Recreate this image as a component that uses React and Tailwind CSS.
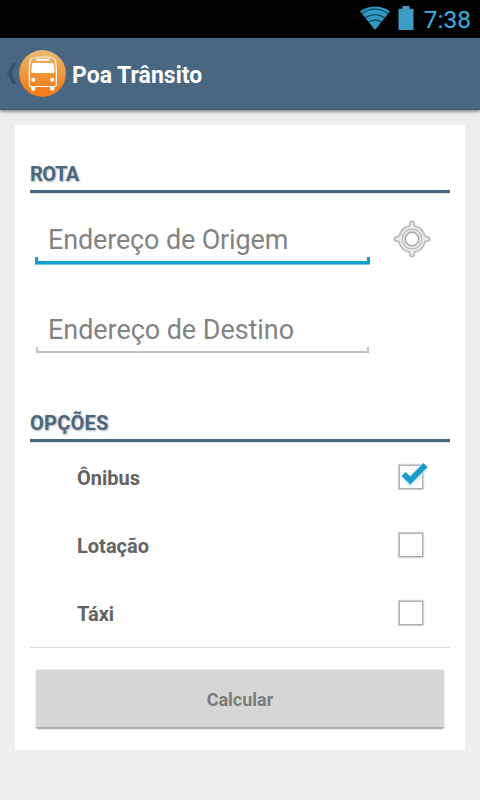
const OPTIONS = [
  { label: "Ônibus", checked: true },
  { label: "Lotação", checked: false },
  { label: "Táxi", checked: false },
];

function WifiIcon() {
  return (
    <svg width="30" height="24" viewBox="0 0 30 24" fill="none">
      <path d="M15 24 0 5.300C8.500-1.200 21.500-1.200 30 5.300Z" fill="#2f98c0" />
      <path d="M1.600 7.700C9.500 1.600 20.500 1.600 28.400 7.700" stroke="#0e4256" strokeWidth="1.100" />
      <path d="M5.200 12C11 7.600 19 7.600 24.800 12" stroke="#0e4256" strokeWidth="1.100" />
      <path d="M8.600 16.200C12.300 13.400 17.700 13.400 21.400 16.200" stroke="#0e4256" strokeWidth="1.100" />
    </svg>
  );
}

function BatteryIcon() {
  return (
    <svg width="16" height="24" viewBox="0 0 16 24">
      <path d="M4.500 0h7v2.700H15.500V24H.5V2.700h4Z" fill="#3f9dc4" />
    </svg>
  );
}

function BusLogo() {
  return (
    <svg width="47" height="47" viewBox="0 0 47 47">
      <defs>
        <linearGradient id="bus-bg" x1="0" y1="0" x2="0" y2="1">
          <stop offset="0" stopColor="#e9bb72" />
          <stop offset="0.5" stopColor="#f0973c" />
          <stop offset="0.8" stopColor="#f47f1f" />
          <stop offset="1" stopColor="#f47f1f" />
        </linearGradient>
      </defs>
      <circle cx="23.500" cy="23.500" r="23.400" fill="url(#bus-bg)" />
      <path
        d="M12 36.500Q10.300 36.500 10.300 34.500V19L11 11C11.300 8.500 17 7 23.800 7S36.300 8.500 36.600 11L37.300 19V34.500Q37.300 36.500 35.500 36.500Z"
        fill="none"
        stroke="#fff"
        strokeWidth="1.200"
        strokeLinejoin="round"
      />
      <rect x="17" y="8.800" width="13.500" height="2" rx="1" fill="#fff" />
      <path d="M14.500 13H33.200Q34.300 13 34.500 14.100L35.500 21Q35.600 22.900 34 22.900H13.700Q12.100 22.900 12.200 21L13.200 14.100Q13.400 13 14.500 13Z" fill="#fff" />
      <circle cx="14.200" cy="29.800" r="2" fill="#fff" />
      <circle cx="33.200" cy="29.800" r="2" fill="#fff" />
      <path d="M12 36.500h4.200v2.700a2.100 1.800 0 0 1-4.200 0ZM31.200 36.500h4.200v2.700a2.100 1.800 0 0 1-4.200 0Z" fill="#fff" />
    </svg>
  );
}

function LocateIcon() {
  const outline =
    "M16.200 6.200 17 4.200V3.500a2 2 0 0 1 4 0V4.200L21.800 6.200A13.100 13.100 0 0 1 31.800 16.200L33.800 17H34.500a2 2 0 0 1 0 4H33.800L31.800 21.800A13.100 13.100 0 0 1 21.800 31.800L21 33.800V34.500a2 2 0 0 1-4 0V33.800L16.200 31.800A13.100 13.100 0 0 1 6.200 21.800L4.200 21H3.500a2 2 0 0 1 0-4H4.200L6.200 16.200A13.100 13.100 0 0 1 16.200 6.200Z";
  return (
    <svg width="38" height="38" viewBox="0 0 38 38" fill="none">
      <path d={outline} fill="#ececec" stroke="#ebebeb" strokeWidth="3" />
      <path d={outline} stroke="#b9b9b9" strokeWidth="1.500" />
      <circle cx="19" cy="19" r="9.900" stroke="#bababa" strokeWidth="1.300" />
      <circle cx="19" cy="19" r="6.800" fill="#fff" stroke="#b0b0b0" strokeWidth="1.700" />
    </svg>
  );
}

function Checkbox({ checked }) {
  return (
    <svg width="34" height="34" viewBox="0 0 34 34" fill="none">
      <rect x="4.500" y="4.500" width="25" height="25" stroke="#efefef" strokeWidth="2" />
      <rect x="5.200" y="5.200" width="23.500" height="23.500" fill="#fff" stroke="#acacac" strokeWidth="1.400" />
      {checked && (
        <>
          <path d="m10 15.500 6.500 6L31.500 6" stroke="#c9ecf7" strokeWidth="8" className="blur-[1.500px]" />
          <path d="m9.500 14 6.800 6.500L31.500 5" stroke="#1b9bcb" strokeWidth="5.600" />
        </>
      )}
    </svg>
  );
}

function SectionTitle({ children }) {
  return (
    <h2 className="h-7 border-b-[3px] border-[#4a6782] text-[20px] leading-[18px] font-bold text-[#4a6782] [text-shadow:1px_1px_2px_rgba(0,0,0,0.3)] shadow-[0_1px_0_#dfe3e7]">
      {children}
    </h2>
  );
}

export default function App() {
  return (
    <div className="flex h-[800px] w-[480px] flex-col overflow-hidden bg-[#eeeeee] font-[Roboto,sans-serif]">
      {/* Status bar */}
      <div className="flex h-[38px] shrink-0 items-center justify-end bg-black pr-[9px] text-[#33b5e5]">
        <span className="-mt-[2px] mr-[10px] flex gap-2">
          <WifiIcon />
          <BatteryIcon />
        </span>
        <span className="pt-[2px] text-[24.500px] leading-none">7:38</span>
      </div>

      {/* Action bar */}
      <header className="flex h-[72px] shrink-0 items-center border-b-2 border-[#43607b] bg-[#4a6782] pl-[6px] shadow-[0_1px_4px_rgba(0,0,0,0.6)]">
        <svg width="13" height="24" viewBox="0 0 13 24">
          <path d="M6.500 1.500h4L6 12.500l4.500 10.500h-4L1 12.500Z" fill="#384f65" />
        </svg>
        <BusLogo />
        <h1 className="ml-[6px] pt-[5px] text-[23px] leading-none font-bold text-white">Poa Trânsito</h1>
      </header>

      <main className="mx-[15px] mt-[15px] h-[625px] bg-white px-[15px] pt-[40px]">
        <SectionTitle>
          <span className="tracking-[-0.5px]">ROTA</span>
        </SectionTitle>

        <div className="flex h-[90px] pl-[5px]">
          <div className="mt-[28px] flex h-[44px] w-[335px] flex-col">
            <div className="h-[36px] pl-[13px] text-[27px] leading-[38px] tracking-[-0.15px] whitespace-nowrap text-[#838383]">
              Endereço de Origem
            </div>
            <div className="h-[7px] border-x-[3px] border-b-[3px] border-[#0f9dd2] shadow-[0_1px_0_#6cc5e6]" />
          </div>
          <div className="mt-[27px] ml-[23px]">
            <LocateIcon />
          </div>
        </div>

        <div className="flex h-[131px] pl-[6px]">
          <div className="mt-[28px] flex h-[44px] w-[333px] flex-col">
            <div className="h-[36px] pl-[12px] text-[27px] leading-[38px] tracking-[-0.060px] whitespace-nowrap text-[#838383]">
              Endereço de Destino
            </div>
            <div className="h-[6px] border-x-2 border-b-2 border-[#c2c2c2]" />
          </div>
        </div>

        <SectionTitle>
          <span className="tracking-[0.250px]">OPÇÕES</span>
        </SectionTitle>

        <ul className="border-b border-[#dcdcdc] pt-px">
          {OPTIONS.map((option) => (
            <li key={option.label} className="flex h-[68px] items-center justify-between pr-[22px] pl-[47px]">
              <span className="pt-[2px] text-[20px] font-bold text-[#636363]">{option.label}</span>
              <Checkbox checked={option.checked} />
            </li>
          ))}
        </ul>

        <button className="mx-[6px] mt-[22px] flex h-[59px] w-[408px] items-center justify-center rounded-[2px] border-b-2 border-[#adadad] bg-[#d6d6d6] pt-[2px] text-[18px] font-bold text-[#7c7c7c] shadow-[0_0_2px_rgba(0,0,0,0.25)]">
          Calcular
        </button>
      </main>
    </div>
  );
}
